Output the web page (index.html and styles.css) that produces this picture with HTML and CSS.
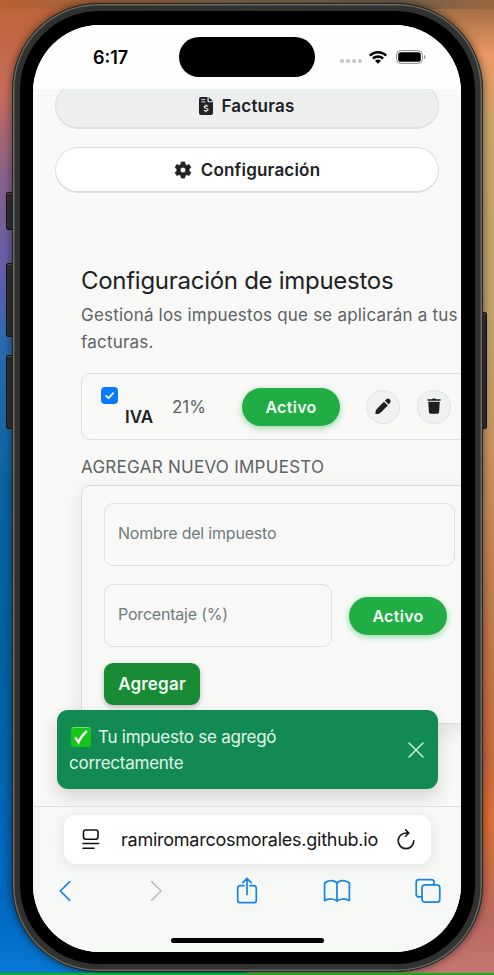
FILE: index.html
```html
<!DOCTYPE html>
<html lang="es">
<head>
<meta charset="utf-8">
<title>Configuración de impuestos</title>
<link rel="stylesheet" href="styles.css">
</head>
<body>
<div class="desktop">
  <span class="key key-action"></span>
  <span class="key key-up"></span>
  <span class="key key-down"></span>
  <span class="key key-power"></span>
  <div class="phone">
    <div class="bezel">
    <div class="screen">
      <header class="status">
        <span class="clock">6:17</span>
        <span class="island"></span>
        <span class="dots"><i></i><i></i><i></i><i></i></span>
        <svg class="wifi" viewBox="0 0 18 13"><path d="M9 0C5.6 0 2.500 1.300.2 3.500a.4.400 0 0 0 0 .6l1.200 1.200c.2.200.4.200.6 0A10.200 10.200 0 0 1 9 2.600c2.700 0 5.200 1 7 2.700.2.200.4.200.6 0l1.200-1.200a.4.400 0 0 0 0-.6A12.700 12.700 0 0 0 9 0Z"/><path d="M9 4.300c-2.200 0-4.200.8-5.700 2.200a.4.400 0 0 0 0 .6l1.300 1.200c.2.200.4.200.6 0A5.600 5.600 0 0 1 9 6.900c1.400 0 2.800.5 3.800 1.400.2.200.4.200.6 0l1.300-1.200a.4.400 0 0 0 0-.6A8.300 8.300 0 0 0 9 4.300Z"/><path d="M9 8.600c-1 0-1.900.4-2.600 1-.2.200-.2.400 0 .6l2.300 2.300c.2.200.4.200.6 0l2.300-2.300c.2-.2.200-.4 0-.6-.7-.6-1.600-1-2.600-1Z"/></svg>
        <svg class="battery" viewBox="0 0 30 14"><rect x=".6" y=".6" width="25.800" height="12.800" rx="4" fill="none" stroke="#8c8c8c"/><rect x="2.200" y="2.200" width="22.600" height="9.600" rx="2.600"/><path d="M28 4.800q1.600.7 1.600 2.200T28 9.200Z" fill="#999"/></svg>
      </header>
      <main class="page">
        <nav class="nav">
          <a class="pill pill-muted">
            <svg class="ico-invoice" viewBox="0 0 14 18"><path d="M2 0h6.500v4.200c0 .6.400 1 1 1H14V16a2 2 0 0 1-2 2H2a2 2 0 0 1-2-2V2a2 2 0 0 1 2-2Z"/><path d="M9.700 0 14 4.200H9.700Z"/><path d="M2.300 2.600h4M2.300 4.900h4" stroke="#eef0f0" stroke-width=".9"/><path d="M9.100 9.400C8.500 8.800 5.200 8.400 5.100 10c0 1.700 4 .8 4 2.600 0 1.600-3.300 1.500-4.200.7M7.100 7.400v1.400m0 5v1.400" fill="none" stroke="#eef0f0" stroke-width="1.200"/></svg>
            Facturas</a>
          <a class="pill">
            <svg class="ico-gear" viewBox="0 0 18 18"><path fill-rule="evenodd" d="M7.400.4h3.200l.5 2.400 1.500.9 2.300-.8 1.600 2.800-1.800 1.600q.2.800 0 1.600l1.800 1.600-1.600 2.800-2.300-.8-1.500.9-.5 2.400H7.400l-.5-2.400-1.500-.9-2.300.8-1.600-2.800 1.800-1.600q-.2-.8 0-1.600L1.500 5.700l1.600-2.800 2.300.8 1.500-.9ZM9 5.400a2.700 2.700 0 1 0 0 5.400 2.700 2.700 0 0 0 0-5.400Z" transform="translate(-.45 .5) scale(1.050)" stroke="#202224" stroke-width=".7" stroke-linejoin="round"/></svg>
            Configuración</a>
        </nav>
        <section class="taxes">
          <h1>Configuración de impuestos</h1>
          <p class="lead">Gestioná los impuestos que se aplicarán a tus<br>facturas.</p>
          <div class="tax-row">
            <span class="check"><svg viewBox="0 0 17 17"><path d="m5 8.900 2.600 2.300 4.500-5"/></svg></span>
            <strong>IVA</strong>
            <span class="rate">21%</span>
            <button class="state">Activo</button>
            <button class="round edit"><svg viewBox="0 0 18 18"><path d="M1 17c-.1-2.500.4-4.500 1.900-6L10 3.900l4.100 4.100L7 15.100C5.500 16.600 3.500 17.100 1 17ZM11 2.900l1.500-1.500c1.200-1.200 2.700-.9 3.700.1 1 1 1.300 2.500.1 3.700l-1.500 1.500Z"/></svg></button>
            <button class="round"><svg viewBox="0 0 16 18"><path d="M6 1.200 6.500.6h3l.5.600h4.300c.7 0 1 .3 1 .8s-.3.800-1 .8H1.700c-.7 0-1-.3-1-.8s.3-.8 1-.8ZM1.900 4h12.200l-.7 10.900c-.1 1.100-.8 1.800-1.900 1.800h-7c-1.100 0-1.800-.7-1.900-1.800Z"/></svg></button>
          </div>
          <h2>AGREGAR NUEVO IMPUESTO</h2>
          <form class="card">
            <div class="field">Nombre del impuesto</div>
            <div class="pair">
              <div class="field">Porcentaje (%)</div>
              <button class="state" type="button">Activo</button>
            </div>
            <button class="add" type="button">Agregar</button>
          </form>
        </section>
        <div class="toast">
          <p><svg class="tick" viewBox="0 0 20 20"><rect width="20" height="20" rx="2.500" fill="#16c51c"/><path d="M1 2q0-1.500 1.500-1.500h15Q19 .5 19 2" fill="none" stroke="#62ec58"/><path d="m4.300 10.400 3.200 5Q10.200 8.800 16 4" fill="none" stroke="#fff" stroke-width="2.300"/></svg><span class="msg">Tu impuesto se agregó</span><br>correctamente</p>
          <svg class="close" viewBox="0 0 16 16"><path d="m1 1 14 14M15 1 1 15"/></svg>
        </div>
      </main>
      <footer class="browser">
        <div class="url">
          <svg class="reader" viewBox="0 0 18 21"><rect x="1.500" y="1" width="14.500" height="9.300" rx="2.200"/><path d="M1 14.500h15.500M1 19.200h11"/></svg>
          <span>ramiromarcosmorales.github.io</span>
          <svg class="reload" viewBox="0 0 18 21"><path d="M16.800 11.800a7.800 7.800 0 1 1-7.800-7.800h2.600M8.600.800l3.200 3.200-3.200 3.200"/></svg>
        </div>
        <div class="tools">
          <svg viewBox="0 0 28 28"><path d="M17.700 4.700 8.300 14l9.400 9.300"/></svg>
          <svg class="off" viewBox="0 0 28 28"><path d="m9.700 4.700 9.400 9.300-9.400 9.300"/></svg>
          <svg viewBox="0 0 28 28"><path d="M11 8.700H7.200Q4.700 8.700 4.700 11.200v12q0 2.500 2.500 2.500h13.600q2.500 0 2.500-2.500v-12q0-2.500-2.500-2.500H17M14 17.500V1.500M9.800 5.600 14 1.400l4.200 4.200"/></svg>
          <svg viewBox="0 0 28 28"><path d="M14 6.200C11.500 2.900 5.200 2.900 1.600 6v17.600c3.600-2.200 9.900-2.300 12.400.5 2.500-2.800 8.800-2.700 12.400-.5V6C22.800 2.900 16.500 2.900 14 6.200v17.900"/></svg>
          <svg viewBox="0 0 28 28"><path d="M20 7.600V5.200Q20 2.700 17.500 2.700H4.700Q2.200 2.700 2.200 5.200v12.100q0 2.500 2.500 2.500h3.200"/><rect x="8" y="7.800" width="17.800" height="17.400" rx="3"/></svg>
        </div>
        <span class="home"></span>
      </footer>
    </div>
    </div>
  </div>
</div>
</body>
</html>
```
FILE: styles.css
```css
* { box-sizing: border-box; }
body { margin: 0; font-family: Inter, "Liberation Sans", sans-serif; color: #202224; }
h1, h2, p { margin: 0; font-weight: 400; }
button { font-family: inherit; border: 0; padding: 0; }
svg { flex: none; display: block; }

.desktop {
  position: relative; width: 494px; height: 975px; overflow: hidden;
  padding: 3px 11px 0 12px; border-bottom: 2px solid #08b512;
  background:
    linear-gradient(90deg, #b96032, #8b6a49 45%, #73614b 80%, #98663f) 0 0 / 100% 9px no-repeat,
    linear-gradient(#bb6337 0, #c96d59 90px, #86618c 180px, #635eaa 270px, #286bb0 350px, #0d649f 480px, #0063a0 650px, #0067bd 900px, #0878d4) 0 0 / 50% 100% no-repeat,
    linear-gradient(#98663f 0, #ed9964 55px, #c9a46a 120px, #bea06c 330px, #c69262 450px, #c07a4e 600px, #ca683e 760px, #dd6e30 820px, #ba6860 920px, #c67570) 100% 0 / 50% 100% no-repeat;
}
.key { position: absolute; background: #303030; border: 1px solid #151515; border-radius: 2px; box-shadow: inset 0 1px #555; }
.key-action { left: 6px; top: 192px; width: 10px; height: 38px; }
.key-up { left: 6px; top: 263px; width: 10px; height: 74px; }
.key-down { left: 6px; top: 355px; width: 10px; height: 74px; }
.key-power { right: 7px; top: 312px; width: 10px; height: 117px; }
.phone {
  position: relative; width: 471px; height: 969px; padding: 7px; border-radius: 86px;
  background: #303230; border: 1px solid #252725;
  box-shadow: inset 0 0 0 1.500px #6a6962, 0 0 9px rgba(0,0,0,.55);
}
.bezel { height: 953px; border-radius: 79px; background: #000; padding: 14px 13px; }
.screen { width: 428px; height: 927px; border-radius: 67px; overflow: hidden; background: #f8f8f6; display: flex; flex-direction: column; }

.status { height: 64px; flex: none; background: #fefefe; display: flex; align-items: center; padding-left: 60px; }
.clock { width: 86px; font-size: 18px; font-weight: 600; color: #000; }
.island { width: 136px; height: 40px; border-radius: 20px; background: #000; }
.dots { display: flex; gap: 2px; margin: 8px 7px 0 25px; }
.dots i { width: 4px; height: 4px; border-radius: 1.500px; background: #c9c9c9; }
.wifi { width: 18px; height: 13px; margin-right: 9px; }
.battery { width: 30px; height: 14px; }

.page { position: relative; height: 717px; flex: none; overflow: hidden; }
.nav { padding: 0 22px; margin-top: -6px; display: flex; flex-direction: column; gap: 18px; }
.pill {
  height: 46px; border-radius: 23px; background: #fff; border: 1px solid #dcdfdf; border-bottom-width: 2px;
  display: flex; align-items: center; justify-content: center; gap: 9px; font-size: 17px; font-weight: 600; letter-spacing: .2px;
}
.pill-muted { background: #edefef; padding-top: 1px; gap: 8px; }
.pill svg { fill: #202224; }
.ico-invoice { width: 14px; height: 18px; }
.ico-gear { width: 18px; height: 18px; }

.taxes { width: 470px; padding: 71px 0 0 48px; }
h1 { font-size: 24px; line-height: 34px; letter-spacing: -.28px; white-space: nowrap; }
.lead { font-size: 17px; line-height: 27px; letter-spacing: .2px; color: #5d6264; margin-top: 4px; white-space: nowrap; }
.tax-row {
  margin-top: 17px; height: 67px; border: 1px solid #dcdfdf; border-radius: 9px;
  display: flex; align-items: center; padding-left: 19px;
}
.check { width: 17px; height: 17px; border-radius: 4px; background: #087aff; margin: 0 7px 23px 0; flex: none; }
.check svg { fill: none; stroke: #fff; stroke-width: 1.800; stroke-linecap: round; stroke-linejoin: round; }
.tax-row strong { width: 47px; font-size: 17px; font-weight: 600; margin-top: 20px; }
.rate { width: 70px; font-size: 17px; color: #5d6264; }
.state {
  width: 98px; height: 38px; border-radius: 19px; background: #20ad43; color: #f2fff5; flex: none;
  font-size: 16px; font-weight: 600; letter-spacing: .3px; box-shadow: 0 2px 6px rgba(32,173,67,.45);
}
.round {
  width: 34px; height: 34px; border-radius: 50%; background: #eff1f2; border: 1px solid #dfe2e4; flex: none;
  display: flex; align-items: center; justify-content: center; margin-left: 17px;
}
.round.edit { margin-left: 26px; }
.round svg { width: 16px; height: 17px; fill: #1d1f21; }
.round.edit svg { width: 18px; }
h2 { font-size: 17px; line-height: 27px; letter-spacing: .27px; color: #5d6264; margin-top: 14px; white-space: nowrap; }
.card {
  height: 239px; margin-top: 4px; border: 1px solid #d9dcdc; border-radius: 9px; padding: 17px 22px;
  box-shadow: 0 6px 22px rgba(0,0,0,.09); background: #f8f9f7;
}
.field {
  width: 351px; height: 63px; border: 1px solid #dde1e2; border-radius: 9px; padding: 0 13px 3px;
  display: flex; align-items: center; font-size: 16px; letter-spacing: -.2px; color: #70797d;
}
.pair { display: flex; align-items: center; gap: 17px; margin: 18px 0 16px; }
.pair .field { width: 228px; letter-spacing: -.2px; }
.add { width: 96px; height: 42px; border-radius: 9px; background: #1a8b35; color: #f2fff5; font-size: 17px; font-weight: 600; letter-spacing: .2px; box-shadow: 0 2px 5px rgba(0,0,0,.25); }
.toast {
  position: absolute; left: 24px; top: 621px; width: 381px; height: 79px; border-radius: 11px; background: #128b53; color: #e2f5e9;
  display: flex; justify-content: space-between; align-items: center; padding: 0 14px 0 12px;
  font-size: 17px; line-height: 26px; letter-spacing: -.25px; box-shadow: 0 8px 18px rgba(0,0,0,.15);
}
.tick { display: inline-block; width: 20px; height: 20px; vertical-align: -4px; margin: 0 7px 0 2px; }
.close { width: 16px; height: 16px; fill: none; stroke: #c5ead3; stroke-width: 1.600; stroke-linecap: round; }

.browser { height: 146px; flex: none; border-top: 1px solid #dddfdf; background: #f6f8f6; display: flex; flex-direction: column; align-items: center; padding-top: 8px; }
.url {
  width: 367px; height: 49px; border-radius: 12px; background: #fff; box-shadow: 0 2px 12px rgba(0,0,0,.09);
  display: flex; align-items: center; justify-content: space-between; padding: 0 15px 0 18px; font-size: 18px; letter-spacing: -.25px; color: #161616;
}
.url svg { width: 18px; height: 21px; fill: none; stroke: #111; stroke-width: 1.600; stroke-linecap: round; stroke-linejoin: round; }
.url span { padding-left: 2px; }
.tools { width: 391px; display: flex; justify-content: space-between; margin-top: 13px; }
.tools svg { width: 28px; height: 28px; fill: none; stroke: #1684e2; stroke-width: 1.700; stroke-linecap: round; stroke-linejoin: round; }
.tools svg:last-child { margin-right: 1px; }
.tools .off { stroke: #bdbfc0; }
.home { width: 153px; height: 5px; border-radius: 3px; background: #000; margin-top: 33px; }
```
